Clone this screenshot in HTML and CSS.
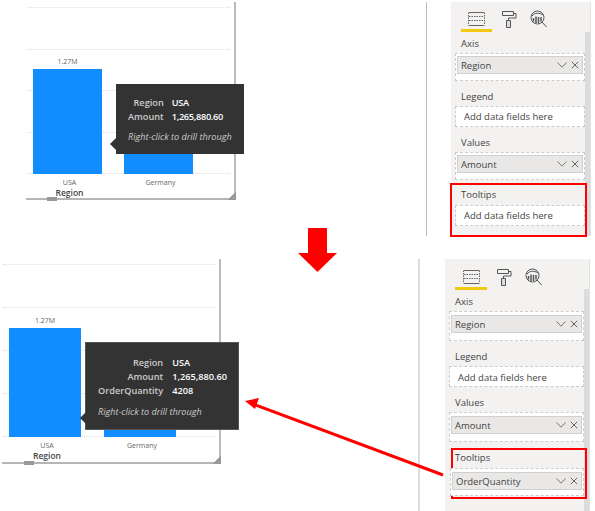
FILE: index.html
```html
<!DOCTYPE html>
<html lang="en">
<head>
  <meta charset="UTF-8">
  <title>Report tooltips</title>
  <link rel="stylesheet" href="styles.css">
</head>
<body>
  <svg width="0" height="0" class="defs">
    <symbol id="chevron" viewBox="0 0 10 6"><path d="M.5.5 5 5.200 9.500.5" fill="none" stroke="#777"/></symbol>
    <symbol id="cross" viewBox="0 0 8 8"><path d="M.8.800l6.400 6.400M7.200.800.800 7.200" fill="none" stroke="#666"/></symbol>
    <symbol id="fields" viewBox="0 0 17 16"><path d="M1 1.500h15M1 14.500h15" stroke="#666" fill="none"/><path d="M.5 1.500v13M16.500 1.500v13M1 5.500h15M1 9.500h15" stroke="#666" stroke-dasharray="1.500 1" fill="none"/></symbol>
    <symbol id="roller" viewBox="0 0 16 18"><path d="M1.500 1.500h11v4h-11zM12.500 3.500h2.500v4.500H7.500v2.500" fill="none" stroke="#555"/><path d="M5.500 10.500h4v7h-4z" fill="#ddd" stroke="#555"/></symbol>
    <symbol id="analytics" viewBox="0 0 17 18"><circle cx="7.500" cy="7.500" r="6.500" fill="none" stroke="#555"/><path d="M3.500 11.500V8M6 13V6.500M8.500 13V7M11 11.500V7" stroke="#555" stroke-width="1.500"/><path d="M2 6c3-3.500 7-3.500 11-1M12 12l4.500 5" fill="none" stroke="#555"/></symbol>
  </svg>

  <section class="shot shot-top">
    <div class="chart">
      <div class="plot">
        <div class="gridlines"><i></i><i></i><i></i><i></i><i></i></div>
        <div class="bars">
          <div class="bar-col"><span class="bar-value">1.27M</span><div class="bar"></div></div>
          <div class="bar-col"><div class="bar bar-low"></div></div>
        </div>
      </div>
      <div class="axis-labels"><span>USA</span><span>Germany</span></div>
      <div class="axis-title">Region</div>
      <span class="handle"></span>
      <span class="corner"></span>
      <div class="tooltip">
        <div class="tooltip-rows">
          <span class="tip-key">Region</span><span class="tip-val">USA</span>
          <span class="tip-key">Amount</span><span class="tip-val">1,265,880.60</span>
        </div>
        <div class="tip-note">Right-click to drill through</div>
      </div>
    </div>
    <div class="sep"></div>
    <aside class="pane">
      <div class="scrollbar"></div>
      <div class="tabs">
        <div class="tab tab-active"><svg width="17" height="16"><use href="#fields"/></svg></div>
        <div class="tab"><svg width="16" height="18"><use href="#roller"/></svg></div>
        <div class="tab"><svg width="17" height="18"><use href="#analytics"/></svg></div>
      </div>
      <div class="field-label">Axis</div>
      <div class="well well-chip"><div class="chip"><span>Region</span><svg class="chev" width="10" height="6"><use href="#chevron"/></svg><svg width="8" height="8"><use href="#cross"/></svg></div></div>
      <div class="field-label">Legend</div>
      <div class="well well-empty">Add data fields here</div>
      <div class="field-label">Values</div>
      <div class="well well-chip"><div class="chip"><span>Amount</span><svg class="chev" width="10" height="6"><use href="#chevron"/></svg><svg width="8" height="8"><use href="#cross"/></svg></div></div>
      <div class="highlight">
        <div class="field-label">Tooltips</div>
        <div class="well well-empty">Add data fields here</div>
      </div>
    </aside>
  </section>

  <section class="shot shot-bottom">
    <div class="chart">
      <div class="plot">
        <div class="gridlines"><i></i><i></i><i></i><i></i><i></i></div>
        <div class="bars">
          <div class="bar-col"><span class="bar-value">1.27M</span><div class="bar"></div></div>
          <div class="bar-col"><div class="bar bar-low"></div></div>
        </div>
      </div>
      <div class="axis-labels"><span>USA</span><span>Germany</span></div>
      <div class="axis-title">Region</div>
      <span class="handle"></span>
      <span class="corner"></span>
      <div class="tooltip">
        <div class="tooltip-rows">
          <span class="tip-key">Region</span><span class="tip-val">USA</span>
          <span class="tip-key">Amount</span><span class="tip-val">1,265,880.60</span>
          <span class="tip-key">OrderQuantity</span><span class="tip-val">4208</span>
        </div>
        <div class="tip-note">Right-click to drill through</div>
      </div>
    </div>
    <div class="sep"></div>
    <aside class="pane">
      <div class="scrollbar"></div>
      <div class="tabs">
        <div class="tab tab-active"><svg width="17" height="16"><use href="#fields"/></svg></div>
        <div class="tab"><svg width="16" height="18"><use href="#roller"/></svg></div>
        <div class="tab"><svg width="17" height="18"><use href="#analytics"/></svg></div>
      </div>
      <div class="field-label">Axis</div>
      <div class="well well-chip"><div class="chip"><span>Region</span><svg class="chev" width="10" height="6"><use href="#chevron"/></svg><svg width="8" height="8"><use href="#cross"/></svg></div></div>
      <div class="field-label">Legend</div>
      <div class="well well-empty">Add data fields here</div>
      <div class="field-label">Values</div>
      <div class="well well-chip"><div class="chip"><span>Amount</span><svg class="chev" width="10" height="6"><use href="#chevron"/></svg><svg width="8" height="8"><use href="#cross"/></svg></div></div>
      <div class="highlight">
        <div class="field-label">Tooltips</div>
        <div class="well well-chip"><div class="chip"><span>OrderQuantity</span><svg class="chev" width="10" height="6"><use href="#chevron"/></svg><svg width="8" height="8"><use href="#cross"/></svg></div></div>
      </div>
    </aside>
  </section>

  <!-- red annotations drawn over the two screenshots -->
  <svg class="annotations" width="595" height="511" viewBox="0 0 595 511">
    <path d="M308 228h19v25h10l-19.500 19-19.500-19h10z" fill="#f00"/>
    <path d="M443 475 254 404.500" stroke="#f00" stroke-width="3" fill="none"/>
    <path d="M245 401l14-3-4 11z" fill="#f00"/>
  </svg>
</body>
</html>
```

FILE: styles.css
```css
* {
  box-sizing: border-box;
}

body {
  margin: 0;
  width: 595px;
  height: 511px;
  overflow: hidden;
  position: relative;
  background: #fff;
  padding-top: 2px;
  font-family: "Open Sans", "Liberation Sans", sans-serif;
  color: #444;
}

.defs {
  position: absolute;
}

.shot {
  display: flex;
  align-items: flex-start;
}

.shot-top {
  height: 236px;
  margin-bottom: 21px;
  --bar-width: 69px;
  --bar-gap: 22px;
}

.shot-bottom {
  height: 252px;
  --bar-width: 72px;
  --bar-gap: 23px;
}

/* chart */
.chart {
  position: relative;
  flex: none;
  border-right: 2px solid #bbb;
  border-bottom: 2px solid #b5b5b5;
  padding-left: 1px;
}

.shot-top .chart {
  width: 210px;
  height: 198px;
  margin-left: 26px;
}

.shot-bottom .chart {
  width: 219px;
  height: 205px;
  margin-left: 2px;
}

.plot {
  display: grid;
  height: 172px;
}

.shot-bottom .plot {
  height: 178px;
}

.gridlines,
.bars {
  grid-area: 1 / 1;
}

.gridlines {
  display: flex;
  flex-direction: column;
  justify-content: space-between;
  padding: 5px 4px 0 0;
}

.gridlines i {
  display: block;
  border-top: 1px dotted #ddd;
}

.bars {
  display: flex;
  align-items: flex-end;
  gap: var(--bar-gap);
  padding-left: 6px;
}

.bar-col {
  width: var(--bar-width);
  text-align: center;
}

.bar-value {
  display: block;
  font-size: 7px;
  line-height: 14px;
  color: #666;
}

.bar {
  height: 105px;
  background: #118dff;
}

.shot-bottom .bar {
  height: 109px;
}

.bars .bar-low {
  height: 80px;
}

.axis-labels {
  display: flex;
  gap: var(--bar-gap);
  padding: 4px 0 0 8px;
  font-size: 7px;
  line-height: 9px;
  color: #666;
}

.axis-labels span {
  width: var(--bar-width);
  text-align: center;
}

.axis-title {
  width: var(--bar-width);
  margin-left: 8px;
  text-align: center;
  font-size: 8.500px;
  line-height: 12px;
  font-weight: 600;
  color: #444;
}

.handle {
  position: absolute;
  bottom: -3px;
  width: 10px;
  height: 4px;
  background: #999;
}

.shot-top .handle {
  left: 21px;
}

.shot-bottom .handle {
  left: 22px;
}

.corner {
  position: absolute;
  right: -2px;
  bottom: -2px;
  width: 8px;
  height: 8px;
  background: linear-gradient(135deg, transparent 50%, #999 50%);
}

/* tooltip */
.tooltip {
  position: absolute;
  background: #333;
  color: #fff;
  font-size: 9.200px;
  padding-left: 12px;
}

.shot-top .tooltip {
  left: 90px;
  top: 82px;
  width: 128px;
  height: 70px;
  padding-top: 12px;
}

.shot-bottom .tooltip {
  left: 83px;
  top: 83px;
  width: 154px;
  height: 88px;
  padding-top: 13px;
  border: 1px solid #555;
}

.tooltip::before {
  content: "";
  position: absolute;
  left: -6px;
  bottom: 4px;
  border-style: solid;
  border-width: 6px 6px 6px 0;
  border-color: transparent #333 transparent transparent;
}

.shot-bottom .tooltip::before {
  bottom: 5px;
}

.tooltip-rows {
  display: grid;
  grid-template-columns: auto auto;
  justify-content: start;
  column-gap: 9px;
  line-height: 14px;
  font-weight: 600;
}

.shot-top .tooltip-rows {
  column-gap: 8px;
}

.tip-key {
  text-align: right;
  color: #ccc;
}

.shot-top .tip-key {
  min-width: 35px;
}

.tip-val {
  color: #fff;
}

.shot-top .tip-val {
  letter-spacing: -0.300px;
}

.tip-note {
  margin-top: 6px;
  font-style: italic;
  font-size: 9.100px;
  line-height: 14px;
  color: #ccc;
}

.shot-bottom .tip-note {
  margin-top: 7px;
}

/* fields pane */
.sep {
  flex: none;
  background: #bbb;
}

.shot-top .sep {
  width: 1px;
  height: 234px;
  margin-left: 190px;
}

.shot-bottom .sep {
  width: 2px;
  height: 252px;
  margin-left: 197px;
  background: #ddd;
}

.pane {
  position: relative;
  flex: none;
  background: #f3f2f1;
  padding-left: 4px;
  border-right: 1px solid #e2e2e2;
}

.shot-top .pane {
  width: 140px;
  height: 234px;
  margin-left: 24px;
  --well-width: 130px;
  --chip-pad: 2px;
}

.shot-bottom .pane {
  width: 145px;
  height: 252px;
  margin-left: 25px;
  --well-width: 135px;
  --chip-pad: 3px;
}

.tabs {
  display: flex;
  gap: 13px;
  height: 30px;
  padding: 8px 0 0 6px;
}

.shot-bottom .tabs {
  height: 31px;
  padding-top: 9px;
}

.tab {
  width: 17px;
  height: 22px;
  text-align: center;
}

.tab-active {
  width: 31px;
  margin-right: -5px;
  border-bottom: 3px solid #f2c811;
}

.shot-bottom .tab-active {
  width: 32px;
}

.field-label {
  margin: 9px 0 2px 6px;
  font-size: 9.500px;
  line-height: 14px;
  color: #444;
}

.tabs + .field-label {
  margin-top: 5px;
}

.well {
  width: var(--well-width);
  background: #fff;
  border: 1px dashed #ccc;
}

.well-empty {
  height: 21px;
  padding-left: 8px;
  font-size: 9.500px;
  line-height: 20px;
  color: #444;
}

.well-chip {
  height: 28px;
  padding: var(--chip-pad) 1px 0;
}

.shot-bottom .well-chip {
  height: 30px;
}

.shot-bottom .well-empty {
  margin-top: 1px;
  line-height: 22px;
}

.chip {
  display: flex;
  align-items: center;
  gap: 4px;
  height: 18px;
  padding: 0 3px;
  background: #e9e8e7;
  border: 1px solid #d0d0d0;
  font-size: 9.500px;
  color: #444;
}

.chip span {
  flex: 1;
}

.highlight {
  position: relative;
  border: 2px solid #f00;
  margin: 3px 0 0 -5px;
  width: 137px;
  height: 54px;
  padding-left: 3px;
}

.highlight .field-label {
  margin: 3px 0 3px 6px;
}

.shot-bottom .highlight {
  width: 136px;
  height: 51px;
  margin: 6px 0 0 2px;
  padding-left: 0;
}

.shot-bottom .highlight .field-label {
  margin: 1px 0 3px 2px;
}

.shot-bottom .highlight .well {
  width: 134px;
  height: 28px;
  margin-left: -3px;
}

.scrollbar {
  position: absolute;
  top: 30px;
  right: 0;
  bottom: 0;
  width: 5px;
  background: #dcdcdc;
}

.annotations {
  position: absolute;
  left: 0;
  top: 0;
}
```
